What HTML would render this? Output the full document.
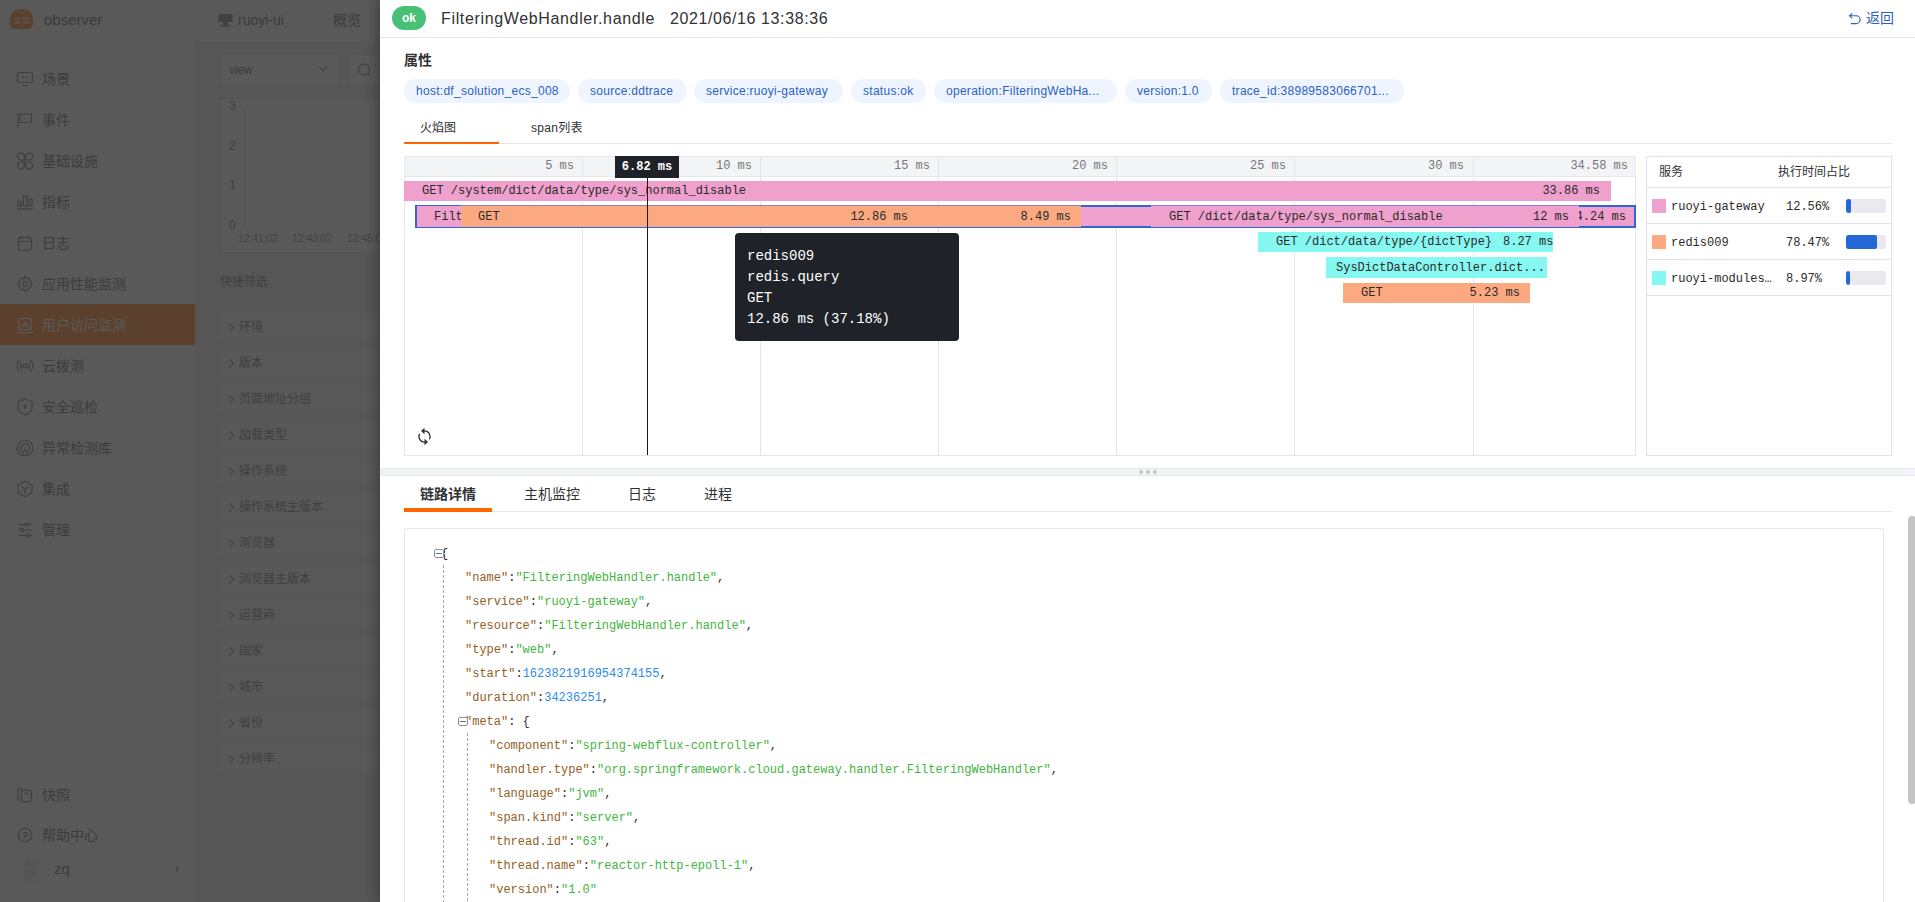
<!DOCTYPE html>
<html lang="zh-CN">
<head>
<meta charset="utf-8">
<title>observer</title>
<style>
*{box-sizing:border-box;margin:0;padding:0}
html,body{width:1915px;height:902px;overflow:hidden}
body{position:relative;background:#565656;font-family:"Liberation Sans","Noto Sans CJK SC",sans-serif;font-size:14px;color:#303133}
.abs{position:absolute}
.mono{font-family:"Liberation Mono","DejaVu Sans Mono","Noto Sans CJK SC",monospace}

/* ---------- dimmed background page ---------- */
#side{position:absolute;left:0;top:0;width:195px;height:902px;background:#595959;box-shadow:1px 0 2px rgba(0,0,0,.08)}
#side .logo{position:absolute;left:10px;top:9px;width:23px;height:20px;border-radius:10px 10px 5px 5px;background:#5c402e}
#side .brand{position:absolute;left:44px;top:10px;font-size:15px;color:#3a3a3a;line-height:20px}
.nav{position:absolute;left:0;width:195px;height:41px;line-height:43px;padding-left:42px;font-size:14px;color:#3c3c3c;white-space:nowrap}
.nav svg{position:absolute;left:16px;top:12px;width:18px;height:18px;stroke:#3e4043;fill:none;stroke-width:1.2}
.nav.act{background:#5c402e;color:#5a5a5a}
.nav.act svg{stroke:#5a5a5a}
#mid{position:absolute;left:195px;top:0;width:185px;height:902px;background:#565656;overflow:hidden}
#mid .hd{position:absolute;left:0;top:0;width:185px;height:42px;background:#595959;box-shadow:0 1px 1px rgba(0,0,0,.04)}
#mid .t{position:absolute;color:#3c3c3c;white-space:nowrap}
.flt{position:absolute;left:25px;width:170px;height:28px;background:#585858;border-radius:3px;line-height:28px;font-size:12px;color:#404040;padding-left:19px;white-space:nowrap}
.flt:before{content:"";position:absolute;left:6px;top:10.5px;width:6px;height:6px;border-top:1px solid #404040;border-right:1px solid #404040;transform:rotate(45deg) scale(.9)}

/* ---------- drawer ---------- */
#drawer{position:absolute;left:380px;top:0;width:1535px;height:902px;background:#fff;box-shadow:-4px 0 10px rgba(0,0,0,.25);overflow:hidden}
#drawer .in{position:absolute;left:-380px;top:0;width:1915px;height:902px}
.tag{position:absolute;top:79px;height:24px;line-height:24px;border-radius:12px;background:#eef5fe;color:#2c5fc4;font-size:12px;letter-spacing:.28px;text-align:left;padding-left:12px;white-space:nowrap;overflow:hidden}
.bar{position:absolute;height:20px;line-height:20px;font-size:12px;color:#2a2a2a;white-space:pre;overflow:hidden}
.pink{background:#efa0cc}.org{background:#fca982}.cyan{background:#87f7f1}
.tick{position:absolute;top:156px;width:1px;height:299px;background:#e4e5e8}
.tl{position:absolute;top:156px;height:21px;line-height:20px;font-size:12px;color:#777;text-align:right;white-space:nowrap}
.jl{position:absolute;font-size:12px;line-height:24px;height:24px;white-space:pre;color:#2e2e2e}
.jl .k{color:#92601f}.jl .s{color:#42b540}.jl .n{color:#2a8bea}
</style>
</head>
<body>
<div id="side">
<div class="logo"></div>
<svg class="abs" style="left:10px;top:9px" width="23" height="20" viewBox="0 0 23 20"><path d="M7.200 0v1.800a2.500 2.500 0 0 0 2.500 2.500h3.600a2.500 2.500 0 0 0 2.500-2.500V0" fill="none" stroke="#5a4a40" stroke-width="1"/><rect x="4" y="8.200" width="6.500" height="2.200" rx=".8" fill="#5a4f49"/><rect x="12.500" y="8.200" width="6.500" height="2.200" rx=".8" fill="#5a4f49"/><rect x="4" y="12.200" width="7" height="2.600" rx=".8" fill="#5a514b"/><rect x="13" y="12.200" width="6" height="2.600" rx=".8" fill="#5a514b"/><rect x="9" y="16.500" width="5" height="1" fill="#5a4d44"/></svg>
<div class="brand">observer</div>
<div class="nav" style="top:58px"><svg viewBox="0 0 18 18"><rect x="1.5" y="2.5" width="15" height="10" rx="1.5"/><path d="M5.5 15.5h7M7 6v2.5M11 6v2.5"/></svg>场景</div>
<div class="nav" style="top:99px"><svg viewBox="0 0 18 18"><path d="M1.800 2v15M4 3.200h11.500v8.300H4z"/></svg>事件</div>
<div class="nav" style="top:140px"><svg viewBox="0 0 18 18"><path d="M8.300 8.300V4.600a3.400 3.400 0 1 0-3.400 3.400H8.300zM9.700 8.300V4.600a3.400 3.400 0 1 1 3.400 3.400H9.700zM8.300 9.700V13.400a3.400 3.400 0 1 1-3.400-3.400H8.300zM9.700 9.700V13.400a3.400 3.400 0 1 0 3.400-3.400H9.700z"/></svg>基础设施</div>
<div class="nav" style="top:181px"><svg viewBox="0 0 18 18"><rect x="2" y="8.5" width="3.2" height="4.5"/><rect x="7.4" y="3" width="3.2" height="10"/><rect x="12.8" y="6" width="3.2" height="7"/><path d="M1 16h16"/></svg>指标</div>
<div class="nav" style="top:222px"><svg viewBox="0 0 18 18"><rect x="2.500" y="3.500" width="13" height="12.500" rx="1"/><path d="M2.500 7.500h13M5.500 1.500v3.500M12.500 1.500v3.500"/></svg>日志</div>
<div class="nav" style="top:263px"><svg viewBox="0 0 18 18"><circle cx="9" cy="9" r="6.3"/><circle cx="9" cy="9" r="2.3"/><path d="M9 .8v2.4M9 14.8v2.4M.8 9h2.4M14.8 9h2.4"/></svg>应用性能监测</div>
<div class="nav act" style="top:304px"><svg viewBox="0 0 18 18"><path d="M3 2.5h12v11H3zM1 16.5h16M5.5 11l3.5-5 3.5 5M7 9h4" /></svg>用户访问监测</div>
<div class="nav" style="top:345px"><svg viewBox="0 0 18 18"><circle cx="9" cy="9" r="1.900"/><path d="M6 5.600a4.600 4.600 0 0 0 0 6.800M12 5.600a4.600 4.600 0 0 1 0 6.800M3.700 3.200a8 8 0 0 0 0 11.600M14.300 3.200a8 8 0 0 1 0 11.600"/></svg>云拨测</div>
<div class="nav" style="top:386px"><svg viewBox="0 0 18 18"><path d="M9 1.2l7 2.3v5.2c0 4-3 6.8-7 8.3-4-1.500-7-4.300-7-8.300V3.500z"/><path d="M9 6v5M6.500 8.500h5"/></svg>安全巡检</div>
<div class="nav" style="top:427px"><svg viewBox="0 0 18 18"><path d="M4 15.500a8 8 0 1 1 10 0"/><path d="M5.800 12.500a4.600 4.600 0 1 1 6.400 0"/><path d="M9 10.500l3.500 6h-7z"/></svg>异常检测库</div>
<div class="nav" style="top:468px"><svg viewBox="0 0 18 18"><path d="M9 1.200l7 4v7.600l-7 4-7-4V5.200z"/><path d="M5 6.500l4 2.500 4-2.500M9 9v4.500"/></svg>集成</div>
<div class="nav" style="top:509px"><svg viewBox="0 0 18 18"><path d="M2.500 3.500h13.500M2.500 9h13.500M2.500 14.500h13.500"/><circle cx="11" cy="3.500" r="1.700" fill="#595959"/><circle cx="6" cy="9" r="1.700" fill="#595959"/><circle cx="12" cy="14.500" r="1.700" fill="#595959"/></svg>管理</div>
<div class="nav" style="top:774px"><svg viewBox="0 0 18 18"><path d="M5.500 4.200V2.500H2v11.500h3.500"/><rect x="5.500" y="4.200" width="10" height="11.500" rx="1.200"/><path d="M8.500 7.500h4"/></svg>快照</div>
<div class="nav" style="top:814px"><svg viewBox="0 0 18 18"><circle cx="9" cy="9" r="6.800"/><path d="M6.800 6.600h4.400v3H8.300v2.800"/></svg>帮助中心</div>
<div class="abs" style="left:18px;top:856px;width:26px;height:26px;border-radius:13px;background:#575757"></div>
<div class="abs" style="left:26px;top:860px;width:9px;height:8px;border-radius:4.500px;background:#545454"></div>
<div class="abs" style="left:24px;top:870px;width:13px;height:8px;border-radius:4px;background:#545454"></div>
<div class="abs" style="left:54px;top:859px;font-size:15px;line-height:20px;color:#3c3c3c">zq</div>
<div class="abs" style="left:176px;top:866px;width:0;height:0;border-left:3.500px solid #444;border-top:3px solid transparent;border-bottom:3px solid transparent"></div>
</div>
<div id="mid">
<div class="hd"></div>
<svg class="abs" style="left:23px;top:13px" width="15" height="15" viewBox="0 0 15 15"><rect x="0.500" y="1" width="14" height="8" rx="1" fill="#414141"/><rect x="5" y="9" width="5" height="3" fill="#414141"/><rect x="2.500" y="12" width="10" height="1.500" fill="#414141"/></svg>
<div class="t" style="left:43px;top:10px;font-size:14px;line-height:20px">ruoyi-ui</div>
<div class="t" style="left:138px;top:10px;font-size:14px;line-height:20px">概览</div>
<div class="abs" style="left:25px;top:54px;width:120px;height:32px;border:1px solid #525252;border-radius:3px;background:#595959"></div>
<div class="t" style="left:34px;top:61px;font-size:12px;line-height:18px">view</div>
<div class="abs" style="left:125px;top:64px;width:6px;height:6px;border-right:1px solid #404040;border-bottom:1px solid #404040;transform:rotate(45deg)"></div>
<div class="abs" style="left:153px;top:54px;width:40px;height:32px;border:1px solid #525252;border-radius:3px;background:#595959"></div>
<svg class="abs" style="left:162px;top:62px" width="16" height="16" viewBox="0 0 16 16"><circle cx="7" cy="7.500" r="5.500" fill="none" stroke="#414449" stroke-width="1.300"/><path d="M11 11.500l2.500 2.500" stroke="#414449" stroke-width="1.300"/></svg>
<div class="abs" style="left:25px;top:98px;width:170px;height:155px;border:1px solid #525252;background:#595959"></div>
<div class="abs" style="left:49px;top:107px;width:1px;height:120px;background:#535353"></div>
<div class="t" style="left:34px;top:98px;font-size:12px;line-height:16px;color:#404040">3</div>
<div class="t" style="left:34px;top:138px;font-size:12px;line-height:16px;color:#404040">2</div>
<div class="t" style="left:34px;top:177px;font-size:12px;line-height:16px;color:#404040">1</div>
<div class="t" style="left:34px;top:217px;font-size:12px;line-height:16px;color:#404040">0</div>
<div class="t" style="left:43px;top:230px;font-size:11px;line-height:16px;color:#444;letter-spacing:-.4px">12:41:02</div>
<div class="t" style="left:97px;top:230px;font-size:11px;line-height:16px;color:#444;letter-spacing:-.4px">12:43:02</div>
<div class="t" style="left:152px;top:230px;font-size:11px;line-height:16px;color:#444;letter-spacing:-.4px">12:45:02</div>
<div class="t" style="left:25px;top:273px;font-size:12px;line-height:18px;color:#404040">快捷筛选</div>
<div class="flt" style="top:313px">环境</div>
<div class="flt" style="top:349px">版本</div>
<div class="flt" style="top:385px">页面地址分组</div>
<div class="flt" style="top:421px">加载类型</div>
<div class="flt" style="top:457px">操作系统</div>
<div class="flt" style="top:493px">操作系统主版本</div>
<div class="flt" style="top:529px">浏览器</div>
<div class="flt" style="top:565px">浏览器主版本</div>
<div class="flt" style="top:601px">运营商</div>
<div class="flt" style="top:637px">国家</div>
<div class="flt" style="top:673px">城市</div>
<div class="flt" style="top:709px">省份</div>
<div class="flt" style="top:745px">分辨率</div>
</div>
<div id="drawer"><div class="in" id="din">
<!--TOP-->
<div class="abs" style="left:392px;top:6px;width:34px;height:24px;border-radius:12px;background:#48c176;color:#fff;font-size:12px;font-weight:bold;line-height:25px;text-align:center">ok</div>
<div class="abs" id="ttl" style="left:441px;top:8px;font-size:16px;letter-spacing:.65px;line-height:22px;color:#303133;white-space:nowrap">FilteringWebHandler.handle</div>
<div class="abs" id="tdate" style="left:670px;top:8px;font-size:16px;letter-spacing:.6px;line-height:22px;color:#303133;white-space:nowrap">2021/06/16 13:38:36</div>
<svg class="abs" style="left:1848px;top:12px" width="14" height="14" viewBox="0 0 14 14"><path d="M4.300 1.300L1.500 3.800l2.800 2.500M1.800 3.800h6.400a3.900 3.900 0 0 1 0 7.800H2.800" fill="none" stroke="#2b5fc4" stroke-width="1.100"/></svg>
<div class="abs" style="left:1866px;top:9px;font-size:14px;line-height:18px;color:#2b5fc4;white-space:nowrap">返回</div>
<div class="abs" style="left:380px;top:37px;width:1535px;height:1px;background:#e3e6ec"></div>
<div class="abs" style="left:404px;top:50px;font-size:14px;font-weight:bold;line-height:20px;color:#303133">属性</div>
<div class="tag" style="left:404px;width:166px">host:df_solution_ecs_008</div>
<div class="tag" style="left:578px;width:109px">source:ddtrace</div>
<div class="tag" style="left:694px;width:149px">service:ruoyi-gateway</div>
<div class="tag" style="left:851px;width:75px">status:ok</div>
<div class="tag" style="left:934px;width:183px">operation:FilteringWebHa...</div>
<div class="tag" style="left:1125px;width:87px">version:1.0</div>
<div class="tag" style="left:1220px;width:184px">trace_id:38989583066701...</div>
<div class="abs" style="left:420px;top:119px;font-size:12px;line-height:18px;color:#303133">火焰图</div>
<div class="abs" style="left:531px;top:119px;font-size:12px;line-height:18px;color:#303133;white-space:nowrap;letter-spacing:.3px">span列表</div>
<div class="abs" style="left:404px;top:143px;width:1488px;height:1px;background:#e4e7ed"></div>
<div class="abs" style="left:404px;top:142px;width:95px;height:2px;background:#ff6600"></div>
<!--/TOP-->
<!--FLAME-->
<div class="abs" style="left:404px;top:156px;width:1232px;height:300px;border:1px solid #e4e7ed;background:#fff"></div>
<div class="abs" style="left:405px;top:157px;width:1230px;height:20px;background:#f3f4f6;border-bottom:1px solid #e6e8eb"></div>
<div class="tick" style="left:582px"></div>
<div class="tick" style="left:760px"></div>
<div class="tick" style="left:938px"></div>
<div class="tick" style="left:1116px"></div>
<div class="tick" style="left:1294px"></div>
<div class="tick" style="left:1473px"></div>
<div class="tl mono" style="left:474px;width:100px">5 ms</div>
<div class="tl mono" style="left:652px;width:100px">10 ms</div>
<div class="tl mono" style="left:830px;width:100px">15 ms</div>
<div class="tl mono" style="left:1008px;width:100px">20 ms</div>
<div class="tl mono" style="left:1186px;width:100px">25 ms</div>
<div class="tl mono" style="left:1364px;width:100px">30 ms</div>
<div class="tl mono" style="left:1528px;width:100px">34.58 ms</div>

<div class="bar pink mono" style="left:404px;top:181px;width:1207px"></div>
<div class="bar mono" style="left:422px;top:181px;background:none">GET /system/dict/data/type/sys_normal_disable</div>
<div class="bar mono" style="left:1500px;top:181px;width:100px;text-align:right;background:none">33.86 ms</div>

<div class="abs" style="left:415px;top:205px;width:1221px;height:23px;border:2px solid #2f66d4;background:#efa0cc"></div>
<div class="bar mono" style="left:1526px;top:207px;width:100px;height:21px;line-height:21px;text-align:right;background:none">34.24 ms</div>
<div class="bar pink mono" style="left:417px;top:206px;width:44px;height:21px;line-height:23px;padding-left:17px">Filt</div>
<div class="bar org mono" style="left:461px;top:206px;width:458px;height:21px;line-height:21px"></div>
<div class="bar org mono" style="left:779px;top:206px;width:302px;height:21px"></div>
<div class="bar mono" style="left:478px;top:207px;height:21px;line-height:21px;background:none">GET</div>
<div class="bar mono" style="left:808px;top:207px;width:100px;height:21px;line-height:21px;text-align:right;background:none">12.86 ms</div>
<div class="bar mono" style="left:971px;top:207px;width:100px;height:21px;line-height:21px;text-align:right;background:none">8.49 ms</div>
<div class="bar pink mono" style="left:1151px;top:206px;width:428px;height:21px;line-height:21px"></div>
<div class="bar mono" style="left:1169px;top:207px;height:21px;line-height:21px;background:none">GET /dict/data/type/sys_normal_disable</div>
<div class="bar mono" style="left:1469px;top:207px;width:100px;height:21px;line-height:21px;text-align:right;background:none">12 ms</div>

<div class="abs" style="left:461px;top:205px;width:620px;height:1px;background:rgba(252,169,130,.45)"></div>
<div class="abs" style="left:1151px;top:205px;width:428px;height:1px;background:rgba(239,160,204,.45)"></div>
<div class="bar cyan mono" style="left:1258px;top:232px;width:295px"></div>
<div class="bar mono" style="left:1276px;top:232px;background:none">GET /dict/data/type/{dictType}</div>
<div class="bar mono" style="left:1503px;top:232px;width:50px;background:none">8.27 ms</div>
<div class="bar cyan mono" style="left:1326px;top:257px;width:221px;height:21px;line-height:23px;padding-left:10px">SysDictDataController.dict...</div>
<div class="bar org mono" style="left:1343px;top:283px;width:187px;padding-left:18px">GET</div>
<div class="bar mono" style="left:1420px;top:283px;width:100px;text-align:right;background:none">5.23 ms</div>

<div class="abs" style="left:647px;top:177px;width:1px;height:278px;background:#1a1a1a"></div>
<div class="abs mono" style="left:615px;top:156px;width:64px;height:22px;background:#1f2329;color:#fff;font-size:12px;font-weight:bold;line-height:23px;text-align:center;white-space:nowrap">6.82 ms</div>

<div class="abs mono" style="left:735px;top:233px;width:224px;height:108px;border-radius:4px;background:#1f2329;color:#fff;font-size:14px;line-height:21px;padding:13px 0 0 12px;white-space:pre">redis009
redis.query
GET
12.86 ms (37.18%)</div>

<svg class="abs" style="left:416px;top:427px" width="17" height="19" viewBox="0 0 17 19"><path d="M8.500 3.200V.800L5 4l3.500 3.200V4.600a4.900 4.900 0 0 1 4.370 7.140l.930 1.060A6.300 6.300 0 0 0 8.500 3.200zM8.500 14.400a4.900 4.900 0 0 1-4.370-7.140L3.200 6.200a6.300 6.300 0 0 0 5.300 9.600v2.400L12 15l-3.500-3.200z" fill="#303133"/></svg>

<div class="abs" style="left:1646px;top:156px;width:246px;height:300px;border:1px solid #dfe3ea;background:#fff"></div>
<div class="abs" style="left:1659px;top:163px;font-size:12px;line-height:18px;color:#303133">服务</div>
<div class="abs" style="left:1778px;top:163px;font-size:12px;line-height:18px;color:#303133;white-space:nowrap">执行时间占比</div>
<div class="abs" style="left:1647px;top:187px;width:244px;height:1px;background:#dfe3ea"></div>
<div class="abs" style="left:1652px;top:199px;width:14px;height:14px;background:#efa0cc"></div>
<div class="abs mono" style="left:1671px;top:198px;font-size:12px;line-height:18px;color:#2a2a2a;white-space:nowrap">ruoyi-gateway</div>
<div class="abs mono" style="left:1786px;top:198px;font-size:12px;line-height:18px;color:#2a2a2a;white-space:nowrap">12.56%</div>
<div class="abs" style="left:1846px;top:199px;width:40px;height:14px;border-radius:2px;background:#e9e9ef;overflow:hidden"><div style="width:5px;height:14px;background:#2468d5;border-radius:2px"></div></div>
<div class="abs" style="left:1647px;top:223px;width:244px;height:1px;background:#dfe3ea"></div>
<div class="abs" style="left:1652px;top:235px;width:14px;height:14px;background:#fca982"></div>
<div class="abs mono" style="left:1671px;top:234px;font-size:12px;line-height:18px;color:#2a2a2a;white-space:nowrap">redis009</div>
<div class="abs mono" style="left:1786px;top:234px;font-size:12px;line-height:18px;color:#2a2a2a;white-space:nowrap">78.47%</div>
<div class="abs" style="left:1846px;top:235px;width:40px;height:14px;border-radius:2px;background:#e9e9ef;overflow:hidden"><div style="width:31px;height:14px;background:#2468d5;border-radius:2px"></div></div>
<div class="abs" style="left:1647px;top:259px;width:244px;height:1px;background:#dfe3ea"></div>
<div class="abs" style="left:1652px;top:271px;width:14px;height:14px;background:#87f7f1"></div>
<div class="abs mono" style="left:1671px;top:270px;font-size:12px;line-height:18px;color:#2a2a2a;white-space:nowrap">ruoyi-modules…</div>
<div class="abs mono" style="left:1786px;top:270px;font-size:12px;line-height:18px;color:#2a2a2a;white-space:nowrap">8.97%</div>
<div class="abs" style="left:1846px;top:271px;width:40px;height:14px;border-radius:2px;background:#e9e9ef;overflow:hidden"><div style="width:4px;height:14px;background:#2468d5;border-radius:2px"></div></div>
<div class="abs" style="left:1647px;top:295px;width:244px;height:1px;background:#dfe3ea"></div>
<!--/FLAME-->
<!--BOT-->
<div class="abs" style="left:380px;top:468px;width:1535px;height:8px;background:#f2f3f5;border-top:1px solid #e4e7ed;border-bottom:1px solid #e4e7ed"></div>
<div class="abs" style="left:1139px;top:470px;width:4px;height:4px;border-radius:2px;background:#c6c6c6"></div>
<div class="abs" style="left:1146px;top:470px;width:4px;height:4px;border-radius:2px;background:#c6c6c6"></div>
<div class="abs" style="left:1153px;top:470px;width:4px;height:4px;border-radius:2px;background:#c6c6c6"></div>
<div class="abs" style="left:420px;top:484px;font-size:14px;font-weight:bold;line-height:20px;color:#303133;white-space:nowrap">链路详情</div>
<div class="abs" style="left:524px;top:484px;font-size:14px;line-height:20px;color:#303133;white-space:nowrap">主机监控</div>
<div class="abs" style="left:628px;top:484px;font-size:14px;line-height:20px;color:#303133;white-space:nowrap">日志</div>
<div class="abs" style="left:704px;top:484px;font-size:14px;line-height:20px;color:#303133;white-space:nowrap">进程</div>
<div class="abs" style="left:404px;top:511px;width:1488px;height:1px;background:#e4e7ed"></div>
<div class="abs" style="left:404px;top:508px;width:88px;height:4px;background:#ff6600"></div>
<div class="abs" style="left:404px;top:528px;width:1480px;height:400px;border:1px solid #e4e7ed;border-radius:2px;background:#fff"></div>
<div class="abs" style="left:1908px;top:516px;width:8px;height:288px;border-radius:4px;background:#c4c4c4"></div>
<div class="abs" style="left:443px;top:565px;width:1px;height:340px;background:repeating-linear-gradient(to bottom,#a8a8a8 0,#a8a8a8 3px,transparent 3px,transparent 5px)"></div>
<div class="abs" style="left:467px;top:733px;width:1px;height:170px;background:repeating-linear-gradient(to bottom,#a8a8a8 0,#a8a8a8 3px,transparent 3px,transparent 5px)"></div>
<div class="abs" style="left:434px;top:549px;width:10px;height:9px;border:1px solid #8a8f99;border-radius:2px;background:#fff;z-index:2"></div>
<div class="abs" style="left:436px;top:553px;width:6px;height:1px;background:#6a6f78;z-index:3"></div>
<div class="jl mono" style="left:441px;top:542px">{</div>
<div class="jl mono" style="left:465px;top:710px"><span class="k">"meta"</span>: {</div>
<div class="abs" style="left:458px;top:717px;width:10px;height:9px;border:1px solid #8a8f99;border-radius:2px;background:#fff;z-index:2"></div>
<div class="abs" style="left:460px;top:721px;width:6px;height:1px;background:#6a6f78;z-index:3"></div>
<div class="jl mono" style="left:465px;top:566px"><span class="k">"name"</span>:<span class="s">"FilteringWebHandler.handle"</span>,</div>
<div class="jl mono" style="left:465px;top:590px"><span class="k">"service"</span>:<span class="s">"ruoyi-gateway"</span>,</div>
<div class="jl mono" style="left:465px;top:614px"><span class="k">"resource"</span>:<span class="s">"FilteringWebHandler.handle"</span>,</div>
<div class="jl mono" style="left:465px;top:638px"><span class="k">"type"</span>:<span class="s">"web"</span>,</div>
<div class="jl mono" style="left:465px;top:662px"><span class="k">"start"</span>:<span class="n">1623821916954374155</span>,</div>
<div class="jl mono" style="left:465px;top:686px"><span class="k">"duration"</span>:<span class="n">34236251</span>,</div>
<div class="jl mono" style="left:489px;top:734px"><span class="k">"component"</span>:<span class="s">"spring-webflux-controller"</span>,</div>
<div class="jl mono" style="left:489px;top:758px"><span class="k">"handler.type"</span>:<span class="s">"org.springframework.cloud.gateway.handler.FilteringWebHandler"</span>,</div>
<div class="jl mono" style="left:489px;top:782px"><span class="k">"language"</span>:<span class="s">"jvm"</span>,</div>
<div class="jl mono" style="left:489px;top:806px"><span class="k">"span.kind"</span>:<span class="s">"server"</span>,</div>
<div class="jl mono" style="left:489px;top:830px"><span class="k">"thread.id"</span>:<span class="s">"63"</span>,</div>
<div class="jl mono" style="left:489px;top:854px"><span class="k">"thread.name"</span>:<span class="s">"reactor-http-epoll-1"</span>,</div>
<div class="jl mono" style="left:489px;top:878px"><span class="k">"version"</span>:<span class="s">"1.0"</span></div>
<!--/BOT-->
</div></div>
</body>
</html>
